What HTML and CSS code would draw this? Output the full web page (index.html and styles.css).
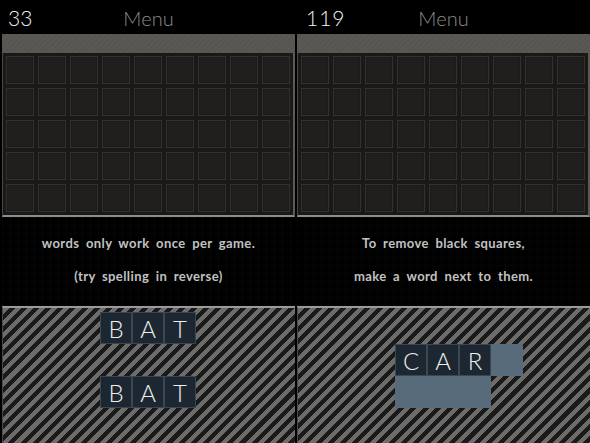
FILE: index.html
```html
<!DOCTYPE html>
<html>
<head>
<meta charset="utf-8">
<link rel="stylesheet" href="styles.css">
</head>
<body>
<div class="screen">
  <section class="panel">
    <header class="top">
      <span class="score">33</span>
      <span class="menu">Menu</span>
    </header>
    <div class="board">
      <div class="bar"></div>
      <div class="grid">
        <div class="cell"></div><div class="cell"></div><div class="cell"></div><div class="cell"></div><div class="cell"></div><div class="cell"></div><div class="cell"></div><div class="cell"></div><div class="cell"></div>
        <div class="cell"></div><div class="cell"></div><div class="cell"></div><div class="cell"></div><div class="cell"></div><div class="cell"></div><div class="cell"></div><div class="cell"></div><div class="cell"></div>
        <div class="cell"></div><div class="cell"></div><div class="cell"></div><div class="cell"></div><div class="cell"></div><div class="cell"></div><div class="cell"></div><div class="cell"></div><div class="cell"></div>
        <div class="cell"></div><div class="cell"></div><div class="cell"></div><div class="cell"></div><div class="cell"></div><div class="cell"></div><div class="cell"></div><div class="cell"></div><div class="cell"></div>
        <div class="cell"></div><div class="cell"></div><div class="cell"></div><div class="cell"></div><div class="cell"></div><div class="cell"></div><div class="cell"></div><div class="cell"></div><div class="cell"></div>
      </div>
    </div>
    <div class="message">
      <p>words only work once per game.</p>
      <p>(try spelling in reverse)</p>
    </div>
    <div class="tray">
      <div class="tiles">
        <div class="tile r1 c4">B</div><div class="tile r1 c5">A</div><div class="tile r1 c6">T</div>
        <div class="tile r3 c4">B</div><div class="tile r3 c5">A</div><div class="tile r3 c6">T</div>
      </div>
    </div>
  </section>
  <section class="panel">
    <header class="top">
      <span class="score">119</span>
      <span class="menu">Menu</span>
    </header>
    <div class="board">
      <div class="bar"></div>
      <div class="grid">
        <div class="cell"></div><div class="cell"></div><div class="cell"></div><div class="cell"></div><div class="cell"></div><div class="cell"></div><div class="cell"></div><div class="cell"></div><div class="cell"></div>
        <div class="cell"></div><div class="cell"></div><div class="cell"></div><div class="cell"></div><div class="cell"></div><div class="cell"></div><div class="cell"></div><div class="cell"></div><div class="cell"></div>
        <div class="cell"></div><div class="cell"></div><div class="cell"></div><div class="cell"></div><div class="cell"></div><div class="cell"></div><div class="cell"></div><div class="cell"></div><div class="cell"></div>
        <div class="cell"></div><div class="cell"></div><div class="cell"></div><div class="cell"></div><div class="cell"></div><div class="cell"></div><div class="cell"></div><div class="cell"></div><div class="cell"></div>
        <div class="cell"></div><div class="cell"></div><div class="cell"></div><div class="cell"></div><div class="cell"></div><div class="cell"></div><div class="cell"></div><div class="cell"></div><div class="cell"></div>
      </div>
    </div>
    <div class="message">
      <p>To remove black squares,</p>
      <p>make a word next to them.</p>
    </div>
    <div class="tray">
      <div class="tiles">
        <div class="tile r2 c4">C</div><div class="tile r2 c5">A</div><div class="tile r2 c6">R</div>
        <div class="ghost r2 c7"></div>
        <div class="ghost wide r3 c4"></div>
      </div>
    </div>
  </section>
</div>
</body>
</html>
```

FILE: styles.css
```css
* { box-sizing: border-box; }
html, body {
  margin: 0;
  padding: 0;
  background: #000;
  width: 590px;
  height: 443px;
  overflow: hidden;
}
.screen {
  display: flex;
  gap: 2px;
  padding-left: 2px;
  height: 443px;
}
.panel {
  width: 293px;
  display: flex;
  flex-direction: column;
}
.top {
  height: 34px;
  display: flex;
  align-items: center;
  position: relative;
  font-family: "Lato", "DejaVu Sans", sans-serif;
  font-weight: 300;
  font-size: 20px;
}
.score {
  color: #f4f4f4;
  padding-left: 6px;
  padding-top: 1px;
  font-size: 21px;
}
.panel + .panel .score { padding-left: 9px; letter-spacing: 1px; }
.menu {
  position: absolute;
  left: 0;
  right: 0;
  text-align: center;
  color: #8c8c8c;
  padding-top: 1px;
}
.board {
  height: 183px;
  display: flex;
  flex-direction: column;
}
.bar {
  height: 19px;
  background-color: #585651;
  background-image: repeating-linear-gradient(135deg, rgba(255,255,255,0.015) 0 2px, rgba(0,0,0,0.015) 2px 4px);
}
.grid {
  flex: 1;
  display: grid;
  grid-template-columns: repeat(9, 32px);
  grid-template-rows: repeat(5, 32px);
  padding: 1px 0 0 1px;
  background: #1a1918;
  border-left: 1px solid #4a4845;
  border-right: 2px solid #5c5a57;
  border-bottom: 2px solid #8f8d8a;
}
.cell {
  margin: 2px;
  background: #211f1e;
  border: 1px solid #33312f;
  box-shadow: inset 0 0 0 1px #1c1b1a;
}
.message {
  height: 89px;
  background-color: #000;
  background-image:
    repeating-linear-gradient(0deg, rgba(255,255,255,0.02) 0 1px, transparent 1px 8px),
    repeating-linear-gradient(90deg, rgba(255,255,255,0.02) 0 1px, transparent 1px 8px);
  display: flex;
  flex-direction: column;
  align-items: center;
  padding-top: 16px;
  gap: 13px;
  font-family: "Lato", "DejaVu Sans", sans-serif;
  font-weight: bold;
  font-size: 13px;
  letter-spacing: 0.4px;
  word-spacing: 3px;
  color: #c2c2c2;
}
.message p {
  margin: 0;
  line-height: 20px;
}
.tray {
  flex: 1;
  border-top: 2px solid #9c9a98;
  border-left: 1px solid #4a4a4a;
  background-color: #1c1c1c;
  background-image: repeating-linear-gradient(135deg, #6c6c6b 0 4.3px, #1a1a1a 4.3px 8.6px);
  padding: 4px 0 0 1px;
}
.tiles {
  display: grid;
  grid-template-columns: repeat(9, 32px);
  grid-template-rows: repeat(4, 32px);
}
.r1 { grid-row: 1; }
.r2 { grid-row: 2; }
.r3 { grid-row: 3; }
.c4 { grid-column: 4; }
.c5 { grid-column: 5; }
.c6 { grid-column: 6; }
.c7 { grid-column: 7; }
.wide { grid-column: 4 / span 3; }
.tile {
  background: #1d2731;
  border: 1px solid #3b4751;
  color: #eef0f0;
  font-family: "Lato", "DejaVu Sans", sans-serif;
  font-weight: 300;
  font-size: 24px;
  display: flex;
  align-items: center;
  justify-content: center;
  padding-top: 1px;
}
.ghost {
  background: #586b7a;
}
```
